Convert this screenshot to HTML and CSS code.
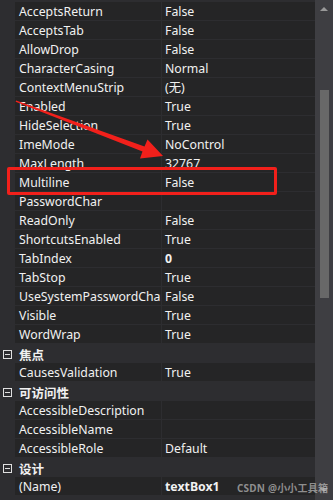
FILE: index.html
```html
<!DOCTYPE html>
<html lang="zh-CN">
<head>
    <meta charset="UTF-8">
    <meta name="viewport" content="width=device-width, initial-scale=1.0">
    <title>属性</title>
    <link rel="stylesheet" href="styles.css">
</head>
<body>
    <div class="panel">
        <div class="props">
            <div class="row"><span class="gutter"></span><span class="name">AcceptsReturn</span><span class="value">False</span></div>
            <div class="row"><span class="gutter"></span><span class="name">AcceptsTab</span><span class="value">False</span></div>
            <div class="row"><span class="gutter"></span><span class="name">AllowDrop</span><span class="value">False</span></div>
            <div class="row"><span class="gutter"></span><span class="name">CharacterCasing</span><span class="value">Normal</span></div>
            <div class="row"><span class="gutter"></span><span class="name">ContextMenuStrip</span><span class="value">(无)</span></div>
            <div class="row"><span class="gutter"></span><span class="name">Enabled</span><span class="value">True</span></div>
            <div class="row"><span class="gutter"></span><span class="name">HideSelection</span><span class="value">True</span></div>
            <div class="row"><span class="gutter"></span><span class="name">ImeMode</span><span class="value">NoControl</span></div>
            <div class="row"><span class="gutter"></span><span class="name">MaxLength</span><span class="value">32767</span></div>
            <div class="row"><span class="gutter"></span><span class="name">Multiline</span><span class="value">False</span></div>
            <div class="row"><span class="gutter"></span><span class="name">PasswordChar</span><span class="value"></span></div>
            <div class="row"><span class="gutter"></span><span class="name">ReadOnly</span><span class="value">False</span></div>
            <div class="row"><span class="gutter"></span><span class="name">ShortcutsEnabled</span><span class="value">True</span></div>
            <div class="row"><span class="gutter"></span><span class="name">TabIndex</span><span class="value changed">0</span></div>
            <div class="row"><span class="gutter"></span><span class="name">TabStop</span><span class="value">True</span></div>
            <div class="row"><span class="gutter"></span><span class="name">UseSystemPasswordChar</span><span class="value">False</span></div>
            <div class="row"><span class="gutter"></span><span class="name">Visible</span><span class="value">True</span></div>
            <div class="row"><span class="gutter"></span><span class="name">WordWrap</span><span class="value">True</span></div>

            <div class="category"><span class="toggle"></span><span class="cat-name">焦点</span></div>
            <div class="row"><span class="gutter"></span><span class="name">CausesValidation</span><span class="value">True</span></div>

            <div class="category"><span class="toggle"></span><span class="cat-name">可访问性</span></div>
            <div class="row"><span class="gutter"></span><span class="name">AccessibleDescription</span><span class="value"></span></div>
            <div class="row"><span class="gutter"></span><span class="name">AccessibleName</span><span class="value"></span></div>
            <div class="row"><span class="gutter"></span><span class="name">AccessibleRole</span><span class="value">Default</span></div>

            <div class="category"><span class="toggle"></span><span class="cat-name">设计</span></div>
            <div class="row"><span class="gutter"></span><span class="name">(Name)</span><span class="value changed">textBox1</span></div>
        </div>

        <div class="scrollbar">
            <span class="arrow up"></span>
            <div class="thumb"></div>
            <span class="arrow down"></span>
        </div>

        <!-- annotation drawn over the grid -->
        <svg class="pointer" width="333" height="500" viewBox="0 0 333 500">
            <polygon points="15.6,101.8 16.2,100.4 144.5,146.5 147.5,139.5 163,156 140,158.5 142.5,151.5" fill="#f2201b"/>
        </svg>
        <div class="highlight"></div>
        <div class="watermark">CSDN @小小工具箱</div>
    </div>
</body>
</html>
```

FILE: styles.css
```css
body {
    margin: 0;
    background-color: #2d2d30;
    font-family: 'Noto Sans', 'Noto Sans CJK SC', sans-serif;
    font-size: 12.3px;
    color: #f1f1f1;
}
.panel {
    position: relative;
    display: flex;
    width: 333px;
    height: 500px;
    overflow: hidden;
}
.props {
    flex: 1;
    padding-top: 2px;
    background-color: #2d2d30;
}
.row {
    display: grid;
    grid-template-columns: 15px 147px 1fr;
    height: 19px;
}
.gutter {
    background-color: #2d2d30;
}
.name,
.value {
    background-color: #252526;
    border-bottom: 1px solid #2d2d30;
    line-height: 18px;
    padding-top: 1px;
    padding-left: 4px;
    white-space: nowrap;
    overflow: hidden;
}
.name {
    border-right: 1px solid #2d2d30;
}
.value {
    padding-left: 3px;
}
.changed {
    font-weight: bold;
}
.category {
    display: flex;
    align-items: center;
    height: 19px;
    padding-top: 1px;
    box-sizing: border-box;
    background-color: #2d2d30;
}
.toggle {
    position: relative;
    box-sizing: border-box;
    width: 9px;
    height: 9px;
    margin: 0 7px 0 3px;
    border: 1px solid #e0e0e0;
}
.toggle::after {
    content: '';
    position: absolute;
    left: 1px;
    right: 1px;
    top: 3px;
    height: 1px;
    background-color: #e0e0e0;
}
.cat-name {
    font-weight: bold;
    font-size: 12.5px;
}
.scrollbar {
    width: 18px;
    display: flex;
    flex-direction: column;
    align-items: center;
    background-color: #3e3e42;
}
.arrow {
    width: 0;
    height: 0;
    border-left: 4px solid transparent;
    border-right: 4px solid transparent;
}
.arrow.up {
    margin-top: 7px;
    border-bottom: 4px solid #999999;
}
.arrow.down {
    margin-top: auto;
    margin-bottom: 8px;
    border-top: 4px solid #999999;
}
.thumb {
    width: 9px;
    height: 208px;
    margin-top: 79px;
    background-color: #686868;
}
.pointer {
    position: absolute;
    left: 0;
    top: 0;
}
.highlight {
    position: absolute;
    left: 7px;
    top: 167px;
    width: 270px;
    height: 28px;
    box-sizing: border-box;
    border: 3px solid #f2201b;
    border-radius: 2px;
}
.watermark {
    position: absolute;
    left: 237px;
    top: 480px;
    font-size: 10px;
    font-weight: bold;
    color: rgba(190, 190, 190, 0.7);
    letter-spacing: 0.2px;
}
```
